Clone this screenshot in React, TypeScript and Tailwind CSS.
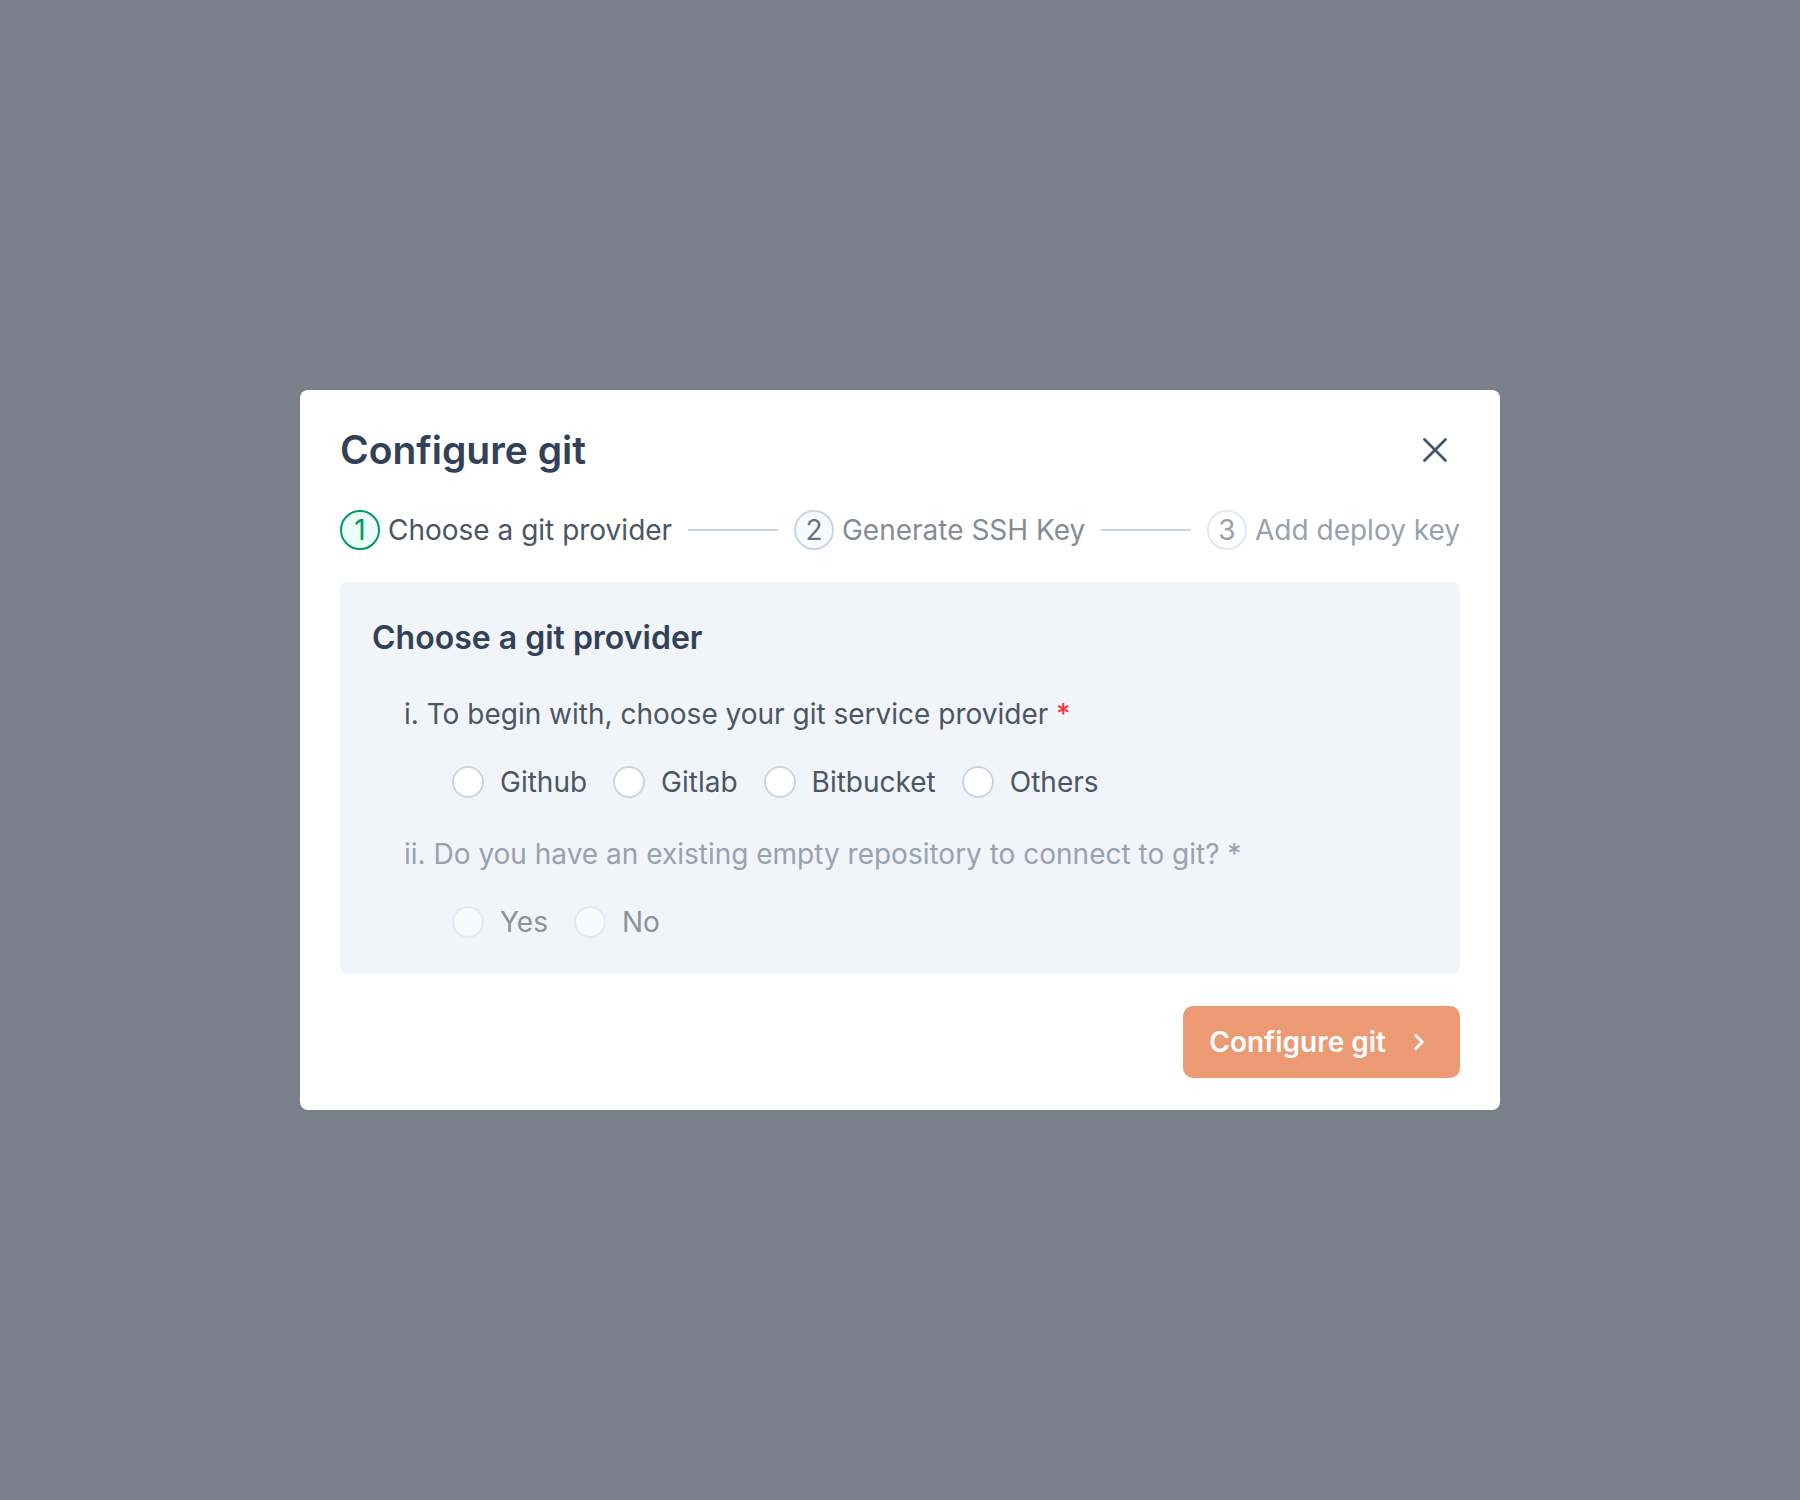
import { Fragment } from "react";
import { X, ChevronRight } from "lucide-react";

type StepState = "current" | "next" | "upcoming";

interface Step {
  n: number;
  label: string;
  state: StepState;
}

const STEPS: Step[] = [
  { n: 1, label: "Choose a git provider", state: "current" },
  { n: 2, label: "Generate SSH Key", state: "next" },
  { n: 3, label: "Add deploy key", state: "upcoming" },
];

const CIRCLE_STYLES: Record<StepState, string> = {
  current: "border-emerald-600 bg-emerald-50 text-emerald-600",
  next: "border-slate-300 bg-slate-50 text-gray-500",
  upcoming: "border-slate-200 bg-white text-gray-400",
};

const LABEL_STYLES: Record<StepState, string> = {
  current: "text-gray-600",
  next: "text-[#858c96]",
  upcoming: "text-gray-400",
};

const PROVIDERS = ["Github", "Gitlab", "Bitbucket", "Others"];

function Radio({ label, disabled }: { label: string; disabled?: boolean }) {
  return (
    <label className="flex items-center">
      <span
        className={`h-8 w-8 rounded-full border-2 ${
          disabled ? "border-slate-200 bg-slate-50" : "border-slate-300 bg-white"
        }`}
      />
      <span
        className={`ml-4 text-[28px] leading-10 ${
          disabled ? "text-[#8b929c]" : "text-gray-600"
        }`}
      >
        {label}
      </span>
    </label>
  );
}

export default function App() {
  return (
    <div className="flex min-h-screen w-full items-center justify-center bg-[#7a808a] [font-family:Inter,sans-serif]">
      <div className="w-[1200px] rounded-lg bg-white px-10 py-8">
        <div className="flex h-14 items-center justify-between">
          <h1 className="text-[39px] leading-[56px] font-semibold text-slate-700">
            Configure git
          </h1>
          <button className="mr-1 text-slate-600" title="Close">
            <X size={42} strokeWidth={1.6} />
          </button>
        </div>

        {/* stepper */}
        <div className="mt-8 flex h-10 items-center">
          {STEPS.map((s, i) => (
            <Fragment key={s.n}>
              <span
                className={`flex h-10 w-10 shrink-0 items-center justify-center rounded-full border-2 text-[28px] leading-none ${CIRCLE_STYLES[s.state]}`}
              >
                {s.n}
              </span>
              <span
                className={`ml-2 text-[28px] leading-10 whitespace-nowrap ${LABEL_STYLES[s.state]}`}
              >
                {s.label}
              </span>
              {i < STEPS.length - 1 && (
                <span className="mx-4 h-[2px] flex-1 bg-slate-300" />
              )}
            </Fragment>
          ))}
        </div>

        <div className="mt-8 rounded-lg bg-slate-100 p-8">
          <h2 className="text-[32px] leading-[48px] font-semibold text-slate-700">
            Choose a git provider
          </h2>

          <p className="mt-8 pl-8 text-[28px] leading-10 text-gray-600">
            i. To begin with, choose your git service provider{" "}
            <span className="text-red-500">*</span>
          </p>
          <div className="mt-[28px] flex items-center gap-[26px] pl-20">
            {PROVIDERS.map((p) => (
              <Radio key={p} label={p} />
            ))}
          </div>

          <p className="mt-8 pl-8 text-[28px] leading-10 text-gray-400">
            ii. Do you have an existing empty repository to connect to git? *
          </p>
          <div className="mt-[28px] flex items-center gap-[26px] pl-20">
            <Radio label="Yes" disabled />
            <Radio label="No" disabled />
          </div>
        </div>

        <div className="mt-8 flex justify-end">
          <button className="flex h-[72px] items-center rounded-[10px] bg-[#ec9a73] pr-7 pl-[26px] text-[28px] font-semibold text-white">
            Configure git
            <ChevronRight size={26} strokeWidth={2.6} className="ml-5" />
          </button>
        </div>
      </div>
    </div>
  );
}
